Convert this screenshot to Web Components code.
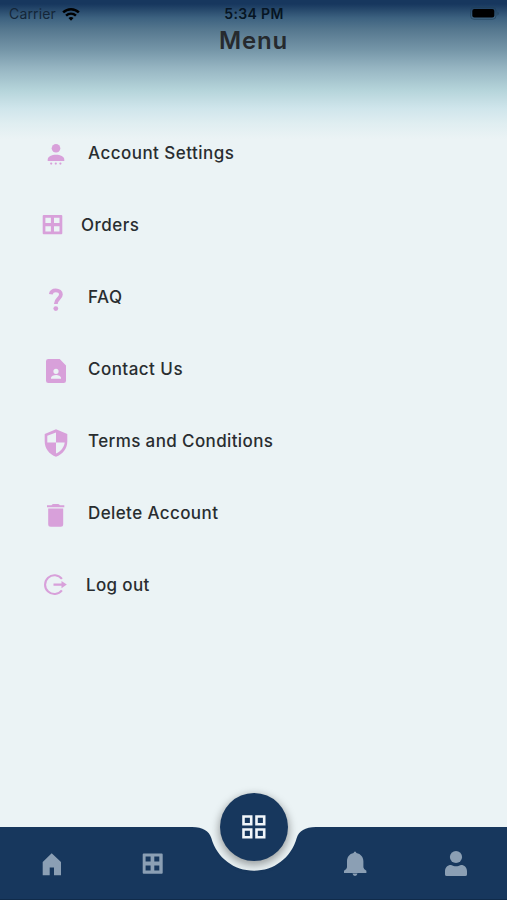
<!DOCTYPE html>
<html lang="en"><head><meta charset="utf-8"><title>Menu</title>
<style>html,body{margin:0;height:100%}body{font-family:Inter,"Liberation Sans",sans-serif;overflow:hidden}</style></head>
<body>
<menu-screen>
  <status-bar slot="status"></status-bar>
  <span slot="title">Menu</span>
  <menu-row icon="account">Account Settings</menu-row>
  <menu-row icon="orders" style="--gap:5px">Orders</menu-row>
  <menu-row icon="faq" style="--track:.6px">FAQ</menu-row>
  <menu-row icon="contact">Contact Us</menu-row>
  <menu-row icon="shield" style="--track:.38px">Terms and Conditions</menu-row>
  <menu-row icon="trash" style="--track:.4px">Delete Account</menu-row>
  <menu-row icon="logout" style="--gap:10px;--track:.35px">Log out</menu-row>
  <tab-bar slot="nav"></tab-bar>
</menu-screen>
<script>
const ICONS = {
  account: '<circle cx="20" cy="16.3" r="4.3"/><path d="M11.7 29v-1.3c0-3 4-4.9 8.3-4.9s8.3 1.9 8.3 4.9V29z"/><circle cx="15.2" cy="31.6" r="1.1"/><circle cx="19.8" cy="31.6" r="1.1"/><circle cx="24.4" cy="31.6" r="1.1"/>',
  orders: '<path fill-rule="evenodd" d="M7.7 11h17.6q1 0 1 1v17.3q0 1-1 1H7.7q-1 0-1-1V12q0-1 1-1zM9.4 13.7v5.4h5.5v-5.4zM18 13.7v5.4h5.5v-5.4zM9.4 22.2v5.4h5.5v-5.4zM18 22.2v5.4h5.5v-5.4z"/>',
  faq: '<path d="M14.800 18.200c.4-2.600 2.300-3.900 5-3.900 3 0 5.100 1.700 5.100 4.300 0 3.900-5.100 4.500-5.100 9.300" fill="none" stroke="currentColor" stroke-width="3.800"/><circle cx="19.8" cy="32.6" r="2.400"/>',
  contact: '<path fill-rule="evenodd" d="M12.3 11h11.4l6.3 6.5v15.2q0 2.3-2.3 2.3H12.3Q10 35 10 32.700V13.300Q10 11 12.300 11zM20 20.700a2.600 2.600 0 1 0 0 5.200 2.600 2.600 0 0 0 0-5.200zM15 30.700h10v-1c0-1.700-2.600-2.800-5-2.800s-5 1.100-5 2.800z"/>',
  shield: '<path fill-rule="evenodd" d="M20 9.300l11.300 4.600v7.600c0 6.900-4.500 13-11.300 15.200-6.800-2.200-11.300-8.300-11.300-15.200v-7.600zM20 12.600v10h8.700v-6.900zM20 22.600h-8.700c.5 4.700 4.200 9.300 8.700 11z" transform="translate(40 0) scale(-1 1)"/>',
  trash: '<path d="M11 13.300h4.500q.8-1.300 2-1.300h4.400q1.200 0 2 1.300h4.400v2H11zM12.200 16.600h15v15.600q0 2.500-2.500 2.500h-10q-2.500 0-2.500-2.500z"/>',
  logout: '<path d="M25.900 14.900a9.400 9.400 0 1 0 0 11.500M17.500 20.600h9" fill="none" stroke="currentColor" stroke-width="2.100"/><path d="M25.500 16.900l5.300 3.700-5.300 3.700z"/>',
  home: '<path d="M20.700 9.300l9.300 8.700v13.300h-7v-7.800h-4.300v7.800h-7V18z"/>',
  grid: '<path fill-rule="evenodd" d="M11.700 9.500h18q1 0 1 1v18.200q0 1-1 1h-18q-1 0-1-1V10.500q0-1 1-1zM13.600 12.500v5h5v-5zM22.300 12.500v5h5v-5zM13.600 21.400v5h5v-5zM22.300 21.400v5h5v-5z"/>',
  bell: '<path d="M20 7.500q1.200 0 1.400 1.600c4.400.8 7 4.100 7 8.400v5.800q.3 2.400 3 3.500v2.200H9v-2.200q2.700-1.100 3-3.500v-5.800c0-4.300 2.300-7.600 6.600-8.400q.2-1.600 1.400-1.600zM17.500 29.500h5q-.4 2.400-2.500 2.400t-2.500-2.400z"/>',
  user: '<circle cx="20" cy="13" r="6.100"/><path d="M9 30.500v-3.200c0-3.800 2.400-6.300 6-6.300 2 1 3.300 1.200 5 1.200s3-.2 5-1.200c3.600 0 6 2.500 6 6.300v3.200q0 1.500-1.800 1.500H10.800Q9 32 9 30.500z"/>'
};
const register = (name, html) => customElements.define(name, class extends HTMLElement {
  constructor() { super(); this.attachShadow({mode: 'open'}).innerHTML = typeof html === 'function' ? html(this) : html; }
});

register('app-icon', el => `<style>:host{display:block;flex:none;width:40px;height:40px}svg{display:block;fill:currentColor}</style>
<svg width="40" height="40" viewBox="0 0 40 40">${ICONS[el.getAttribute('name')]}</svg>`);

register('menu-row', el => `<style>
:host{display:flex;align-items:center;height:72px;gap:var(--gap,12px);padding-left:36px;color:#292d30;font-size:17px;font-weight:500;letter-spacing:var(--track,.47px);line-height:24px;white-space:nowrap}
span{padding-top:2px}
app-icon{color:#d8a0da}</style>
<app-icon name="${el.getAttribute('icon')}"></app-icon><span><slot></slot></span>`);

register('status-bar', `<style>
:host{display:grid;grid-template-columns:1fr auto 1fr;align-items:center;height:28px;padding:0 8px 0 9px;color:#061523;font-size:14px;line-height:18px;box-sizing:border-box}
.left{display:flex;align-items:center;gap:6px;letter-spacing:.15px;color:#142638}.time{font-weight:600;letter-spacing:.35px}
.battery{justify-self:end}svg{display:block}</style>
<div class="left"><span>Carrier</span><svg width="18" height="14" viewBox="0 0 19 14"><g fill="none" stroke="#000" stroke-width="2.600"><path d="M1.200 5.300a12 12 0 0 1 16.600 0M4.300 8.700a7.500 7.500 0 0 1 10.400 0"/></g><path fill="#000" d="M6.800 11.200a4.200 4.200 0 0 1 5.400 0L9.500 14z"/></svg></div>
<span class="time">5:34 PM</span>
<svg class="battery" width="29" height="14" viewBox="0 0 29 14"><rect x=".5" y=".3" width="25.500" height="12" rx="3.500" fill="none" stroke="#203f55" stroke-opacity=".6"/><rect x="2.300" y="2.100" width="22" height="8.500" rx="2" fill="#000"/><path d="M27.300 4.500v4q1.500-.6 1.500-2t-1.500-2z" fill="#203f55" fill-opacity=".6"/></svg>`);

register('tab-bar', `<style>
:host{display:block;position:relative;height:73px}
.shape{position:absolute;left:0;bottom:0;display:block}
nav{position:relative;display:grid;grid-template-columns:repeat(5,1fr);justify-items:center;padding-top:17px;color:#8b9fb4}
.fab{position:absolute;left:50%;top:-34.500px;width:68.500px;height:68.500px;margin-left:-33.700px;border-radius:50%;background:#17375d;box-shadow:0 3px 9px 1px rgba(0,0,0,.36);display:grid;place-items:center}
.fab svg{display:block}</style>
<svg class="shape" width="507" height="73" viewBox="0 0 507 73"><path fill="#17375d" d="M0 0H192C203 0 209 4 211.300 11C217 31 234 43.700 254 43.700S291 31 296.700 11C299 4 305 0 316 0H507V73H0z"/><path d="M0 72.500H507" stroke="#102b4a"/></svg>
<div class="fab"><svg width="24" height="24" viewBox="0 0 24 24" fill="none" stroke="#f1f6fa" stroke-width="2.600"><path d="M1.500 1.500h7.700v7.700H1.500zM14.500 1.500h7.700v7.700h-7.700zM1.500 14.500h7.700v7.700H1.500zM14.500 14.500h7.700v7.700h-7.700z"/></svg></div>
<nav><app-icon name="home"></app-icon><app-icon name="grid"></app-icon><span></span><app-icon name="bell"></app-icon><app-icon name="user"></app-icon></nav>`);

register('menu-screen', `<style>
:host{display:flex;flex-direction:column;width:507px;height:900px;background:linear-gradient(#17375e 0,#17375e 4px,#3d6280 18px,#56788f 30px,#7596a8 50px,#96b5c2 68px,#b5d4da 90px,#cfe5eb 108px,#e0eef1 124px,#ebf3f5 139px)}
h1{margin:0;height:88px;text-align:center;font-size:24px;line-height:25px;font-weight:600;letter-spacing:.8px;color:#262a2e}
main{flex:1}</style>
<slot name="status"></slot><h1><slot name="title"></slot></h1><main><slot></slot></main><slot name="nav"></slot>`);
</script></body></html>
